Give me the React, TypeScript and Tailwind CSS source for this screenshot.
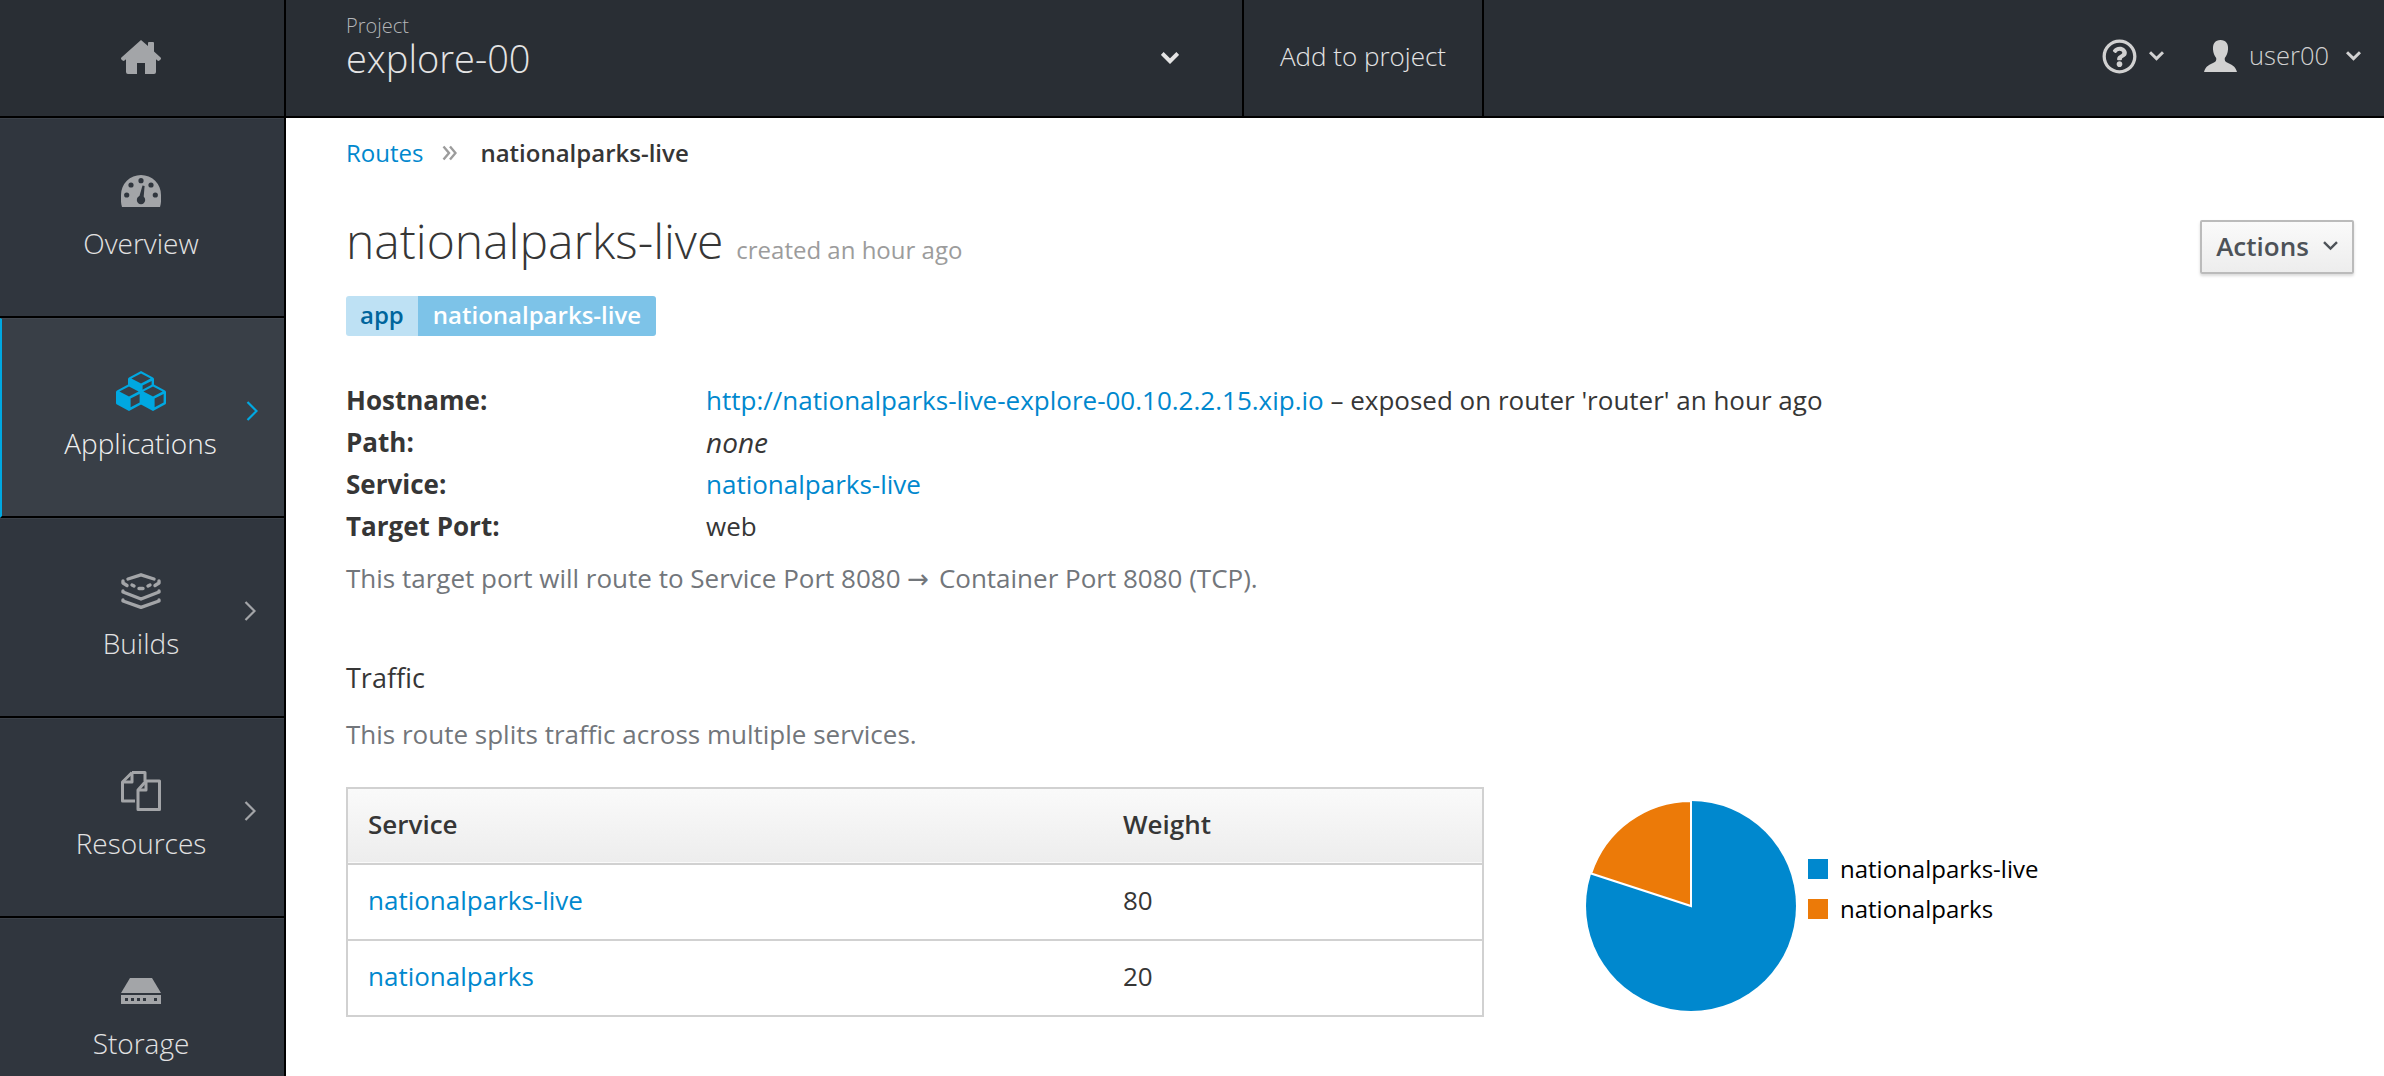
import type { ReactNode } from "react";
import { FaRegQuestionCircle } from "react-icons/fa";

const HomeIcon = () => (
  <svg width="40" height="34" viewBox="0 0 40 34" fill="#a3a5a8">
    <path d="M20 0 L27 6 V3 Q27 2 28 2 H32 Q33 2 33 3 V11.5 L39.6 17.5 Q40.4 18.4 39.6 19.4 L38.4 20.6 Q37.5 21.4 36.5 20.6 L35 19.2 V32 Q35 34 33 34 H24 V23 H16 V34 H7 Q5 34 5 32 V19.2 L3.5 20.6 Q2.5 21.4 1.6 20.6 L0.4 19.4 Q-0.4 18.4 0.4 17.5 Z" />
  </svg>
);

const DashboardIcon = () => (
  <svg width="40" height="32" viewBox="0 0 40 32">
    <path d="M1 32 C-0.5 27 0 24 0 20 A20 20 0 0 1 40 20 C40 24 40.5 27 39 32 Z" fill="#a3a5a8" />
    <g fill="#30363e">
      <circle cx="5.7" cy="20" r="2.6" />
      <circle cx="10" cy="10" r="2.6" />
      <circle cx="20" cy="5.7" r="2.6" />
      <circle cx="30" cy="10" r="2.6" />
      <circle cx="34.3" cy="20" r="2.6" />
      <circle cx="20" cy="25" r="4.2" />
      <path d="M17.6 24 L21.5 10.5 L23.6 11 L22.4 25 Z" />
    </g>
  </svg>
);

const Cube = ({ x, y }: { x: number; y: number }) => (
  <g transform={`translate(${x} ${y})`}>
    <path
      d="M13 0 L25 6.5 Q26 7 26 8 V19 Q26 20 25 20.5 L13 27 L1 20.5 Q0 20 0 19 V8 Q0 7 1 6.5 Z"
      fill="#00a8e1"
    />
    <path d="M13 2.6 L22.6 7.6 L13 12.6 L3.4 7.6 Z" fill="#393f47" />
    <path d="M14.6 14.6 L23.6 10 V18.4 L14.6 23.2 Z" fill="#393f47" />
  </g>
);

const CubesIcon = () => (
  <svg width="50" height="40" viewBox="0 0 50 40">
    <Cube x={12} y={0} />
    <Cube x={0} y={13} />
    <Cube x={24} y={13} />
  </svg>
);

const BuildIcon = () => (
  <svg width="40" height="36" viewBox="0 0 40 36" fill="none" stroke="#a3a5a8" strokeWidth="3.4" strokeLinejoin="round" strokeLinecap="round">
    <path d="M7 6 L20 1.8 L33 6" />
    <path d="M2 8 L2 10 L6 12.5" />
    <path d="M38 8 L38 10 L34 12.5" />
    <path d="M2 18 V19 L20 26 L38 19 V18" />
    <path d="M2 27 V28 L20 34.3 L38 28 V27" />
    <path d="M11 12 L13 13 M18 15.5 L22 15.5 M27 13 L29 12" />
  </svg>
);

const FilesIcon = () => (
  <svg width="40" height="40" viewBox="0 0 40 40" fill="none" stroke="#a3a5a8" strokeWidth="3" strokeLinejoin="round">
    <path d="M11 1.5 H24 V10 M11 1.5 L1.5 11 V30 H14" />
    <path d="M11 1.5 V11 H1.5" />
    <path d="M25 10 H38.5 V38.5 H17 V19 Z" />
    <path d="M25 10 V19 H17" />
  </svg>
);

const StorageIcon = () => (
  <svg width="40" height="26" viewBox="0 0 40 26">
    <path d="M9 0 H31 L40 15 H0 Z" fill="#a3a5a8" />
    <rect x="0" y="17" width="40" height="9" fill="#a3a5a8" />
    <g fill="#30363e">
      <rect x="4" y="20" width="3" height="3" />
      <rect x="10" y="20" width="3" height="3" />
      <rect x="16" y="20" width="3" height="3" />
      <rect x="22" y="20" width="3" height="3" />
      <rect x="33" y="20" width="3" height="3" />
    </g>
  </svg>
);

const UserIcon = () => (
  <svg width="33" height="32" viewBox="0 0 33 32" fill="#d1d1d1">
    <path d="M16.5 0 C22 0 24.5 4 24 9.5 C23.8 13 22.5 16 20.8 18 C20.5 20 21 21.5 23 22.5 C27 24.3 31.5 26 33 32 H0 C1.5 26 6 24.3 10 22.5 C12 21.5 12.5 20 12.2 18 C10.5 16 9.2 13 9 9.5 C8.5 4 11 0 16.5 0 Z" />
  </svg>
);

const Chevron = ({ color = "#d1d1d1", width = 15, stroke = 3 }: { color?: string; width?: number; stroke?: number }) => (
  <svg width={width} height={width * 0.64} viewBox="0 0 15 9.6" fill="none" stroke={color} strokeWidth={stroke} className="shrink-0">
    <path d="M1 1.2 L7.5 7.6 L14 1.2" />
  </svg>
);

const DoubleAngle = () => (
  <svg width="15" height="16" viewBox="0 0 15 16" fill="none" stroke="#9c9c9c" strokeWidth="2.4" className="shrink-0">
    <path d="M1.5 1.5 L7 8 L1.5 14.5 M8 1.5 L13.5 8 L8 14.5" />
  </svg>
);

const NavArrow = ({ color }: { color: string }) => (
  <svg width="12" height="20" viewBox="0 0 12 20" fill="none" stroke={color} strokeWidth="2.2" className="absolute left-[244px] top-[82px]">
    <path d="M1.5 1 L10.5 10 L1.5 19" />
  </svg>
);

const NavItem = ({ icon, label, active, arrow }: { icon: ReactNode; label: string; active?: boolean; arrow?: boolean }) => (
  <div
    className={
      active
        ? "relative flex h-[200px] shrink-0 flex-col items-center border-b-2 border-l-2 border-t border-b-black border-l-[#00a8e1] border-t-[#41474f] bg-[#393f47] pt-[52px] pr-[5px] text-[#f0f0f0]"
        : "relative flex h-[200px] shrink-0 flex-col items-center border-b-2 border-t border-b-black border-t-[#3b4149] pt-[52px] pr-[2px] text-[#e2e2e2]"
    }
  >
    <div className="flex h-[40px] items-center justify-center">{icon}</div>
    <div className="mt-[14px] text-[28px] font-light leading-[36px]">{label}</div>
    {arrow && <NavArrow color={active ? "#00a8e1" : "#a3a5a8"} />}
  </div>
);

const DetailRow = ({ label, children }: { label: string; children: ReactNode }) => (
  <div className="flex h-[42px] items-center">
    <div className="w-[360px] font-bold">{label}</div>
    <div>{children}</div>
  </div>
);

const Pie = () => (
  <svg width="210" height="210" viewBox="0 0 210 210" className="shrink-0">
    <circle cx="105" cy="105" r="105" fill="#0088ce" />
    <path d="M105 105 L105 0 A105 105 0 0 0 5.14 72.55 Z" fill="#ec7a08" stroke="#fff" strokeWidth="2" />
  </svg>
);

export default function App() {
  return (
    <div className="flex h-screen w-full flex-col overflow-hidden bg-white font-['Open_Sans',sans-serif] text-[26px] text-[#363636]">
      {/* top bar */}
      <div className="flex h-[118px] shrink-0 border-b-2 border-black bg-[#292e34] text-[#d1d1d1]">
        <div className="flex w-[286px] items-center justify-center border-r-2 border-black pb-[2px] pr-[3px]">
          <HomeIcon />
        </div>
        <div className="flex w-[958px] items-center justify-between border-r-2 border-black pl-[60px] pr-[63px]">
          <div className="flex flex-col pb-[22px]">
            <span className="text-[20px] font-light leading-[22px] text-[#b4b6b9]">Project</span>
            <span className="text-[38px] font-light leading-[42px] text-[#e4e4e4]">explore-00</span>
          </div>
          <Chevron color="#e4e4e4" width={18} stroke={3.4} />
        </div>
        <div className="flex w-[240px] items-center justify-center border-r-2 border-black pb-[3px] text-[26px] font-light text-[#e4e4e4]">
          Add to project
        </div>
        <div className="flex flex-1 items-center justify-end pb-[4px] pr-[23px]">
          <FaRegQuestionCircle size={35} color="#d1d1d1" />
          <div className="ml-[12px] mr-[40px]">
            <Chevron />
          </div>
          <UserIcon />
          <span className="ml-[12px] mr-[17px] pb-[2px] text-[25.5px] font-light leading-[32px]">user00</span>
          <Chevron />
        </div>
      </div>

      <div className="flex min-h-0 flex-1">
        {/* sidebar */}
        <div className="flex w-[286px] shrink-0 flex-col overflow-hidden border-r-2 border-black bg-[#30363e]">
          <NavItem icon={<DashboardIcon />} label="Overview" />
          <NavItem icon={<CubesIcon />} label="Applications" active arrow />
          <NavItem icon={<BuildIcon />} label="Builds" arrow />
          <NavItem icon={<FilesIcon />} label="Resources" arrow />
          <NavItem icon={<StorageIcon />} label="Storage" />
        </div>

        {/* content */}
        <div className="min-w-0 flex-1 pl-[60px] pr-[30px]">
          <div className="flex h-[70px] items-center text-[24px]">
            <a className="text-[#0088ce]">Routes</a>
            <span className="ml-[19px] mr-[23px]">
              <DoubleAngle />
            </span>
            <span className="font-semibold">nationalparks-live</span>
          </div>

          <div className="mt-[23px] flex items-start justify-between">
            <div className="flex h-[60px] items-baseline">
              <h1 className="text-[48px] font-light leading-[60px]">nationalparks-live</h1>
              <span className="ml-[13px] text-[24px] text-[#9c9c9c]">created an hour ago</span>
            </div>
            <button className="mt-[9px] flex h-[54px] w-[154px] items-center justify-center gap-[14px] rounded-[2px] border-2 border-[#bbbbbb] bg-gradient-to-b from-[#fafafa] to-[#ededed] pb-[2px] text-[26px] font-semibold text-[#4d5258] shadow-[0_2px_3px_rgba(0,0,0,0.15)]">
              Actions
              <Chevron color="#4d5258" width={15} stroke={2.4} />
            </button>
          </div>

          <div className="mt-[22px] flex h-[40px] w-fit overflow-hidden rounded-[3px] text-[24px] font-semibold leading-[38px]">
            <span className="bg-[#bee1f4] px-[14px] text-[#00659c]">app</span>
            <span className="bg-[#7dc3e8] px-[15px] text-white">nationalparks-live</span>
          </div>

          <div className="mt-[43px]">
            <DetailRow label="Hostname:">
              <a className="text-[#0088ce]">http://nationalparks-live-explore-00.10.2.2.15.xip.io</a>
              <span> – exposed on router 'router' an hour ago</span>
            </DetailRow>
            <DetailRow label="Path:">
              <em className="text-[28px]">none</em>
            </DetailRow>
            <DetailRow label="Service:">
              <a className="text-[#0088ce]">nationalparks-live</a>
            </DetailRow>
            <DetailRow label="Target Port:">web</DetailRow>
          </div>

          <p className="mt-[10px] h-[42px] leading-[42px] text-[#72767b]">
            This target port will route to Service Port 8080 <span className="mr-[3px] font-['DejaVu_Sans',sans-serif] leading-none">→</span> Container Port 8080 (TCP).
          </p>

          <h3 className="mt-[58px] text-[27px] leading-[42px]">Traffic</h3>
          <p className="mt-[14px] leading-[42px] text-[#72767b]">This route splits traffic across multiple services.</p>

          <div className="mt-[32px] flex items-start">
            <table className="w-[1138px] shrink-0 border-collapse border-2 border-[#d1d1d1]">
              <thead>
                <tr className="h-[76px] border-b-2 border-[#d1d1d1] bg-gradient-to-b from-[#fafafa] to-[#ededed]">
                  <th className="w-[776px] pb-[3px] pl-[20px] text-left font-semibold">Service</th>
                  <th className="pb-[3px] text-left font-semibold">Weight</th>
                </tr>
              </thead>
              <tbody>
                <tr className="h-[76px] border-b-2 border-[#d1d1d1]">
                  <td className="pb-[3px] pl-[20px] text-[#0088ce]">nationalparks-live</td>
                  <td className="pb-[3px]">80</td>
                </tr>
                <tr className="h-[76px]">
                  <td className="pb-[3px] pl-[20px] text-[#0088ce]">nationalparks</td>
                  <td className="pb-[3px]">20</td>
                </tr>
              </tbody>
            </table>

            <div className="ml-[102px] mt-[14px]">
              <Pie />
            </div>

            <div className="ml-[12px] mt-[72px] flex flex-col gap-[20px] text-[24px] text-black">
              <div className="flex h-[20px] items-center gap-[12px]">
                <span className="h-[20px] w-[20px] bg-[#0088ce]" />
                nationalparks-live
              </div>
              <div className="flex h-[20px] items-center gap-[12px]">
                <span className="h-[20px] w-[20px] bg-[#ec7a08]" />
                nationalparks
              </div>
            </div>
          </div>
        </div>
      </div>
    </div>
  );
}
